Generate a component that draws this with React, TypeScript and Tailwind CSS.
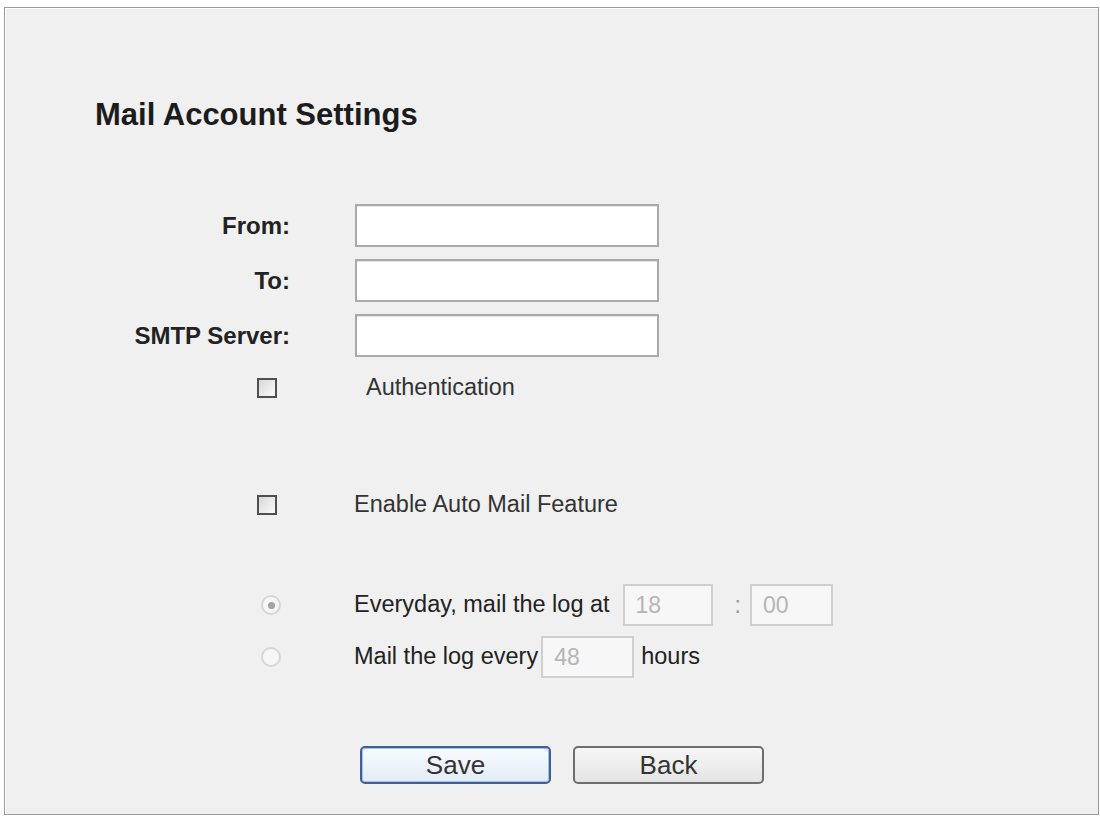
import React from 'react';

const font = { fontFamily: '"Liberation Sans", Arial, sans-serif' };

const TextBox = ({ className = '' }: { className?: string }) => (
    <div className={`h-[43px] w-[304px] border-2 border-[#a9a9a9] bg-white shadow-[inset_0_1px_0_#e6e6e6] ${className}`} />
);

const CheckBox = () => (
    <div className="h-[20px] w-[20px] border-2 border-[#4f4f4f] bg-gradient-to-br from-[#d8d8d8] to-[#fafafa]" />
);

const Radio = ({ checked }: { checked?: boolean }) => (
    <div className="flex h-[20px] w-[20px] items-center justify-center rounded-full border-2 border-[#d6d6d6] bg-[#f6f6f6]">
        {checked && <div className="h-[7px] w-[7px] rounded-full bg-[#a3a3a3]" />}
    </div>
);

const SmallBox = ({ value, w }: { value: string; w: string }) => (
    <div className={`flex h-[42px] ${w} items-center border-2 border-[#cfcfcf] bg-[#f7f7f7] pl-[11px] text-[23px] text-[#b5b5b5]`}>
        {value}
    </div>
);

const App = () => {
    return (
        <div className="h-[817px] w-[1100px] bg-white pl-[4px] pt-[7px]" style={font}>
            <div className="h-[808px] w-[1095px] border border-[#9a9a9a] bg-[#f0f0f0] shadow-[inset_1px_1px_0_#ffffff]">
                {/* heading */}
                <h1 className="ml-[90px] mt-[89px] h-[36px] text-[31px] font-bold leading-[36px] text-[#1c1c1c]">
                    Mail Account Settings
                </h1>

                {/* server fields */}
                <div className="mt-[71px] flex flex-col gap-[12px]">
                    {['From:', 'To:', 'SMTP Server:'].map((label) => (
                        <div key={label} className="flex items-center">
                            <div className="w-[285px] text-right text-[24px] font-bold text-[#222]">{label}</div>
                            <TextBox className="ml-[65px]" />
                        </div>
                    ))}
                </div>

                <div className="mt-[21px] flex h-[20px] items-center pl-[252px]">
                    <CheckBox />
                    <span className="ml-[89px] text-[23.5px] text-[#333]">Authentication</span>
                </div>

                <div className="mt-[97px] flex h-[20px] items-center pl-[252px]">
                    <CheckBox />
                    <span className="ml-[77px] text-[23.5px] text-[#333]">Enable Auto Mail Feature</span>
                </div>

                {/* schedule options */}
                <div className="mt-[69px] flex h-[42px] items-center pl-[256px]">
                    <Radio checked />
                    <span className="ml-[73px] text-[23.5px] text-[#222]">Everyday, mail the log at</span>
                    <SmallBox value="18" w="ml-[13px] w-[90px]" />
                    <span className="ml-[22px] text-[23px] text-[#9a9a9a]">:</span>
                    <SmallBox value="00" w="ml-[9px] w-[83px]" />
                </div>
                <div className="mt-[10px] flex h-[42px] items-center pl-[256px]">
                    <Radio />
                    <span className="ml-[73px] text-[23.5px] text-[#222]">Mail the log every</span>
                    <SmallBox value="48" w="ml-[3px] w-[93px]" />
                    <span className="ml-[7px] text-[23.5px] text-[#222]">hours</span>
                </div>

                {/* actions */}
                <div className="mt-[68px] flex gap-[22px] pl-[355px]">
                    <button className="h-[38px] w-[191px] rounded-[5px] border-2 border-[#3f5f95] bg-gradient-to-b from-[#f7fbff] to-[#e3ecf7] text-[26px] leading-none text-[#333] shadow-[inset_0_0_0_1px_#9fc3ec]">
                        Save
                    </button>
                    <button className="h-[38px] w-[191px] rounded-[5px] border-2 border-[#6e6e6e] bg-gradient-to-b from-[#f6f6f6] to-[#e4e4e4] text-[26px] leading-none text-[#333]">
                        Back
                    </button>
                </div>
            </div>
        </div>
    );
};

export default App;
